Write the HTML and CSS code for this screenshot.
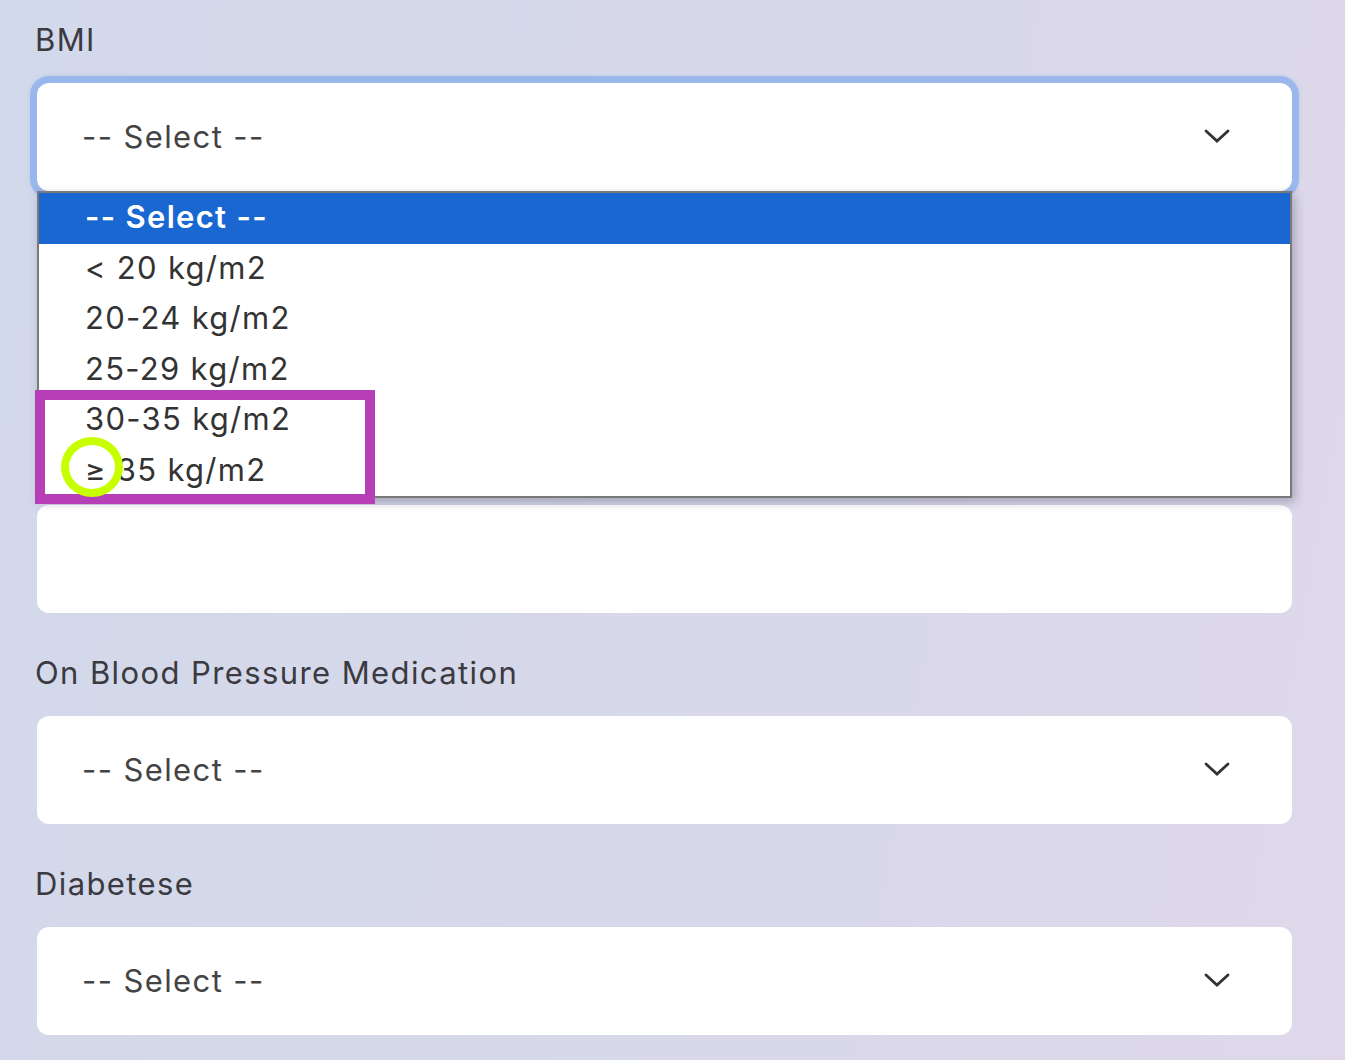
FILE: index.html
```html
<!DOCTYPE html>
<html lang="en">
<head>
<meta charset="utf-8">
<title>Form</title>
<link rel="stylesheet" href="styles.css">
</head>
<body>
<div class="form">
  <div class="field">
    <div class="label">BMI</div>
    <div class="select focused">
      <span class="value">-- Select --</span>
      <svg class="chev" width="26" height="14" viewBox="0 0 26 14"><polyline points="2,2 13,12 24,2" fill="none" stroke="#333" stroke-width="2.8" stroke-linecap="round" stroke-linejoin="miter"/></svg>
      <ul class="listbox">
        <li class="opt active">-- Select --</li>
        <li class="opt">&lt; 20 kg/m2</li>
        <li class="opt">20-24 kg/m2</li>
        <li class="opt">25-29 kg/m2</li>
        <li class="opt">30-35 kg/m2</li>
        <li class="opt">≥ 35 kg/m2</li>
      </ul>
    </div>
  </div>
  <div class="field">
    <div class="label">&nbsp;</div>
    <div class="select"></div>
  </div>
  <div class="field">
    <div class="label">&nbsp;</div>
    <div class="select"></div>
  </div>
  <div class="field">
    <div class="label">On Blood Pressure Medication</div>
    <div class="select">
      <span class="value">-- Select --</span>
      <svg class="chev" width="26" height="14" viewBox="0 0 26 14"><polyline points="2,2 13,12 24,2" fill="none" stroke="#333" stroke-width="2.8" stroke-linecap="round" stroke-linejoin="miter"/></svg>
    </div>
  </div>
  <div class="field">
    <div class="label">Diabetese</div>
    <div class="select">
      <span class="value">-- Select --</span>
      <svg class="chev" width="26" height="14" viewBox="0 0 26 14"><polyline points="2,2 13,12 24,2" fill="none" stroke="#333" stroke-width="2.8" stroke-linecap="round" stroke-linejoin="miter"/></svg>
    </div>
  </div>
</div>
<div class="annot-rect"></div>
<div class="annot-circle"></div>
</body>
</html>
```

FILE: styles.css
```css
* { box-sizing: border-box; }
html, body { margin: 0; padding: 0; }
body {
  width: 1345px;
  height: 1060px;
  overflow: hidden;
  background: linear-gradient(100deg, #d2d9ea 0%, #d8d8ea 60%, #ded8ea 100%);
  font-family: Inter, "Noto Sans", sans-serif;
  color: #3a3a3a;
}
.form {
  padding: 18px 0 0 36px;
  width: 1292px;
}
.field { margin-bottom: 38px; }
.label {
  font-size: 31px;
  letter-spacing: 1.4px;
  line-height: 44px;
  height: 44px;
  margin-bottom: 21px;
  margin-left: -1px;
  color: #3a3a40;
}
.select {
  position: relative;
  margin-left: 1px;
  height: 108px;
  background: #fff;
  border-radius: 12px;
  display: flex;
  align-items: center;
  padding: 0 62px 2px 45px;
}
.select.focused {
  box-shadow: 0 0 0 7px rgba(140, 175, 236, 0.75), 0 0 3px 8px rgba(160, 190, 240, 0.35);
}
.value {
  flex: 1;
  font-size: 31px;
  letter-spacing: 1.4px;
  color: #444;
}
.chev { display: block; }
.listbox {
  position: absolute;
  left: 0;
  right: 0;
  top: 108px;
  margin: 0;
  padding: 0;
  list-style: none;
  background: #fff;
  border: 2px solid #7a7a7a;
  box-shadow: 3px 4px 10px rgba(40, 40, 60, 0.3);
  z-index: 5;
}
.opt {
  height: 50.5px;
  line-height: 48px;
  padding-left: 46px;
  font-size: 31px;
  letter-spacing: 1.3px;
  color: #333;
}
.opt.active {
  background: #1a67d2;
  color: #fff;
  font-weight: 600;
}
.annot-rect {
  position: absolute;
  left: 35px;
  top: 390px;
  width: 340px;
  height: 114px;
  border: 10px solid #b63fb8;
  z-index: 10;
}
.annot-circle {
  position: absolute;
  left: 61px;
  top: 437px;
  width: 62px;
  height: 60px;
  border: 8px solid #c8ff00;
  border-radius: 50%;
  z-index: 11;
}
```
